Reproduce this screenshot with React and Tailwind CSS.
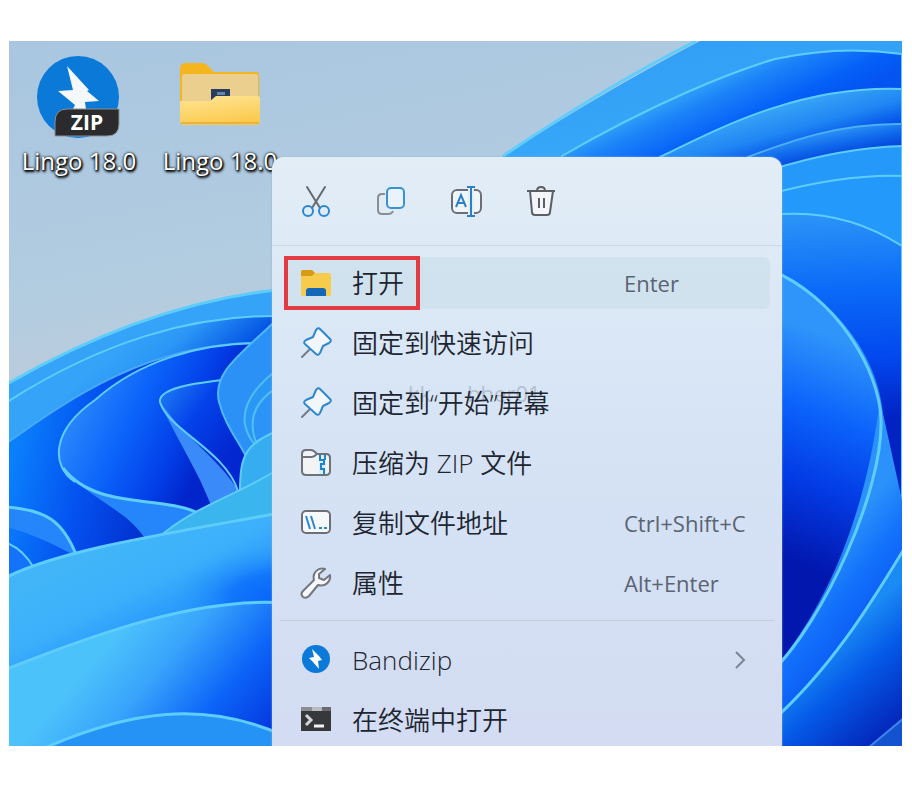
import { useState } from 'react'

const LINE = '#5fcdfb'

// Bloom wallpaper, petals are painted from back to front
function Wallpaper() {
  return (
    <svg
      className="absolute inset-0 h-full w-full"
      viewBox="9 41 893 705"
      preserveAspectRatio="none"
      aria-hidden="true"
    >
      <defs>
        <linearGradient id="sky" x1="0" y1="0" x2="0.25" y2="1">
          <stop offset="0" stopColor="#a9c6e0" />
          <stop offset="0.35" stopColor="#b2cce0" />
          <stop offset="0.6" stopColor="#c3cbd9" />
        </linearGradient>
        <linearGradient id="rim" x1="0" y1="0" x2="0.3" y2="1">
          <stop offset="0" stopColor="#2f9cf5" />
          <stop offset="0.6" stopColor="#38a9f8" />
          <stop offset="1" stopColor="#2390fa" />
        </linearGradient>
        <linearGradient id="fold" gradientUnits="userSpaceOnUse" x1="720" y1="76" x2="750" y2="140">
          <stop offset="0" stopColor="#2f9ff8" />
          <stop offset="0.25" stopColor="#1b83f8" />
          <stop offset="0.7" stopColor="#0560f8" />
          <stop offset="1" stopColor="#0454f2" />
        </linearGradient>
        <linearGradient id="band" gradientUnits="userSpaceOnUse" x1="820" y1="96" x2="835" y2="150">
          <stop offset="0" stopColor="#36a2f6" />
          <stop offset="0.45" stopColor="#1f86f4" />
          <stop offset="0.8" stopColor="#0455ea" />
          <stop offset="1" stopColor="#033fd8" />
        </linearGradient>
        <linearGradient id="band2" gradientUnits="userSpaceOnUse" x1="830" y1="130" x2="836" y2="160">
          <stop offset="0" stopColor="#2c94f5" />
          <stop offset="0.5" stopColor="#0f68ec" />
          <stop offset="1" stopColor="#033fd8" />
        </linearGradient>
        <linearGradient id="petalR" gradientUnits="userSpaceOnUse" x1="850" y1="215" x2="860" y2="420">
          <stop offset="0" stopColor="#2a93f7" />
          <stop offset="0.35" stopColor="#0b6bf8" />
          <stop offset="0.7" stopColor="#0248ee" />
          <stop offset="1" stopColor="#0222c4" />
        </linearGradient>
        <linearGradient id="petalR2" gradientUnits="userSpaceOnUse" x1="870" y1="350" x2="790" y2="560">
          <stop offset="0" stopColor="#3095fa" />
          <stop offset="0.35" stopColor="#0b62fb" />
          <stop offset="0.65" stopColor="#033be4" />
          <stop offset="1" stopColor="#0217ae" />
        </linearGradient>
        <linearGradient id="sheet" gradientUnits="userSpaceOnUse" x1="820" y1="560" x2="880" y2="610">
          <stop offset="0" stopColor="#2a92fa" />
          <stop offset="0.5" stopColor="#1371fb" />
          <stop offset="1" stopColor="#0b5cf5" />
        </linearGradient>
        <linearGradient id="sheet2" gradientUnits="userSpaceOnUse" x1="810" y1="660" x2="880" y2="740">
          <stop offset="0" stopColor="#1a8af5" />
          <stop offset="0.4" stopColor="#055ae8" />
          <stop offset="1" stopColor="#0326ba" />
        </linearGradient>
        <linearGradient id="shade" gradientUnits="userSpaceOnUse" x1="130" y1="340" x2="180" y2="400">
          <stop offset="0" stopColor="#34a3f8" />
          <stop offset="0.4" stopColor="#2b96f6" />
          <stop offset="1" stopColor="#0455e4" />
        </linearGradient>
        <linearGradient id="pool" gradientUnits="userSpaceOnUse" x1="10" y1="470" x2="150" y2="500">
          <stop offset="0" stopColor="#0a80fc" />
          <stop offset="0.5" stopColor="#0452f0" />
          <stop offset="1" stopColor="#0230cf" />
        </linearGradient>
        <linearGradient id="leaf" gradientUnits="userSpaceOnUse" x1="65" y1="430" x2="190" y2="490">
          <stop offset="0" stopColor="#2a86fb" />
          <stop offset="0.4" stopColor="#0b63fa" />
          <stop offset="0.75" stopColor="#0340e8" />
          <stop offset="1" stopColor="#0224cb" />
        </linearGradient>
        <linearGradient id="leaf2" gradientUnits="userSpaceOnUse" x1="165" y1="395" x2="235" y2="450">
          <stop offset="0" stopColor="#1a72f2" />
          <stop offset="0.4" stopColor="#0442ea" />
          <stop offset="1" stopColor="#0226cf" />
        </linearGradient>
        <linearGradient id="cyan" gradientUnits="userSpaceOnUse" x1="130" y1="540" x2="190" y2="660">
          <stop offset="0" stopColor="#41b5f8" />
          <stop offset="0.35" stopColor="#3cb0fb" />
          <stop offset="0.75" stopColor="#2290fb" />
          <stop offset="1" stopColor="#1b86f8" />
        </linearGradient>
        <linearGradient id="cyan2" gradientUnits="userSpaceOnUse" x1="120" y1="630" x2="260" y2="750">
          <stop offset="0" stopColor="#4cc2fb" />
          <stop offset="0.3" stopColor="#38a4fb" />
          <stop offset="0.65" stopColor="#0c64f8" />
          <stop offset="1" stopColor="#0434de" />
        </linearGradient>
        <radialGradient id="glow" gradientUnits="userSpaceOnUse" cx="285" cy="600" r="110" gradientTransform="translate(0 300) scale(1 0.5)">
          <stop offset="0" stopColor="#0561fa" />
          <stop offset="0.5" stopColor="#0b6dfb" stopOpacity="0.75" />
          <stop offset="1" stopColor="#2a9afb" stopOpacity="0" />
        </radialGradient>
      </defs>

      <rect x="9" y="41" width="893" height="705" fill="url(#sky)" />

      {/* upper right arcs */}
      <path d="M400 240 L503 156 Q610 88 700 41 H902 V300 H400Z" fill="url(#rim)" />
      <path d="M503 156 Q610 84 696 41" fill="none" stroke="#62cdfa" strokeWidth="3" />
      <path d="M562 156 C650 105 730 72 775 59 Q840 45 902 54 V300 H562Z" fill="url(#fold)" stroke={LINE} strokeWidth="2" />
      <path d="M660 157 C720 128 800 85 902 89 V300 H660Z" fill="url(#band)" stroke={LINE} strokeWidth="2" />
      <path d="M748 157 C790 141 840 123 902 124 V300 H748Z" fill="url(#band2)" stroke="#4daef5" strokeWidth="2" />
      <path d="M770 170 Q840 148 902 146 V300 H770Z" fill="#2599fa" stroke={LINE} strokeWidth="2" />
      <path d="M770 194 Q845 174 902 176 V300 H770Z" fill="#239afb" stroke={LINE} strokeWidth="2" />
      <path d="M770 215 Q842 207 902 246 V746 H770Z" fill="url(#petalR)" stroke={LINE} strokeWidth="2" />
      <path d="M770 270 C835 295 895 370 882 448 L890 600 L770 690Z" fill="url(#petalR2)" />
      <path d="M880 400 L902 500 V746 H770 V674 C825 610 865 520 880 400Z" fill="url(#sheet)" />
      <path d="M770 270 C835 295 880 370 881 420" fill="none" stroke={LINE} strokeWidth="3" />
      <path d="M881 420 C883 490 825 620 770 674" fill="none" stroke={LINE} strokeWidth="3" />
      <path d="M770 723 C830 670 870 605 904 549 V750 H770Z" fill="url(#sheet2)" stroke={LINE} strokeWidth="3" />
      <path d="M868 748 L904 718 V748Z" fill="#1353cf" stroke="#3c87ee" strokeWidth="2" />

      {/* left bloom */}
      <path d="M7 384 Q150 302 285 289 V746 H7Z" fill="#35a4f8" stroke={LINE} strokeWidth="3" />
      <path d="M7 402 C100 343 190 314 285 316 V746 H7Z" fill="url(#shade)" stroke={LINE} strokeWidth="2" />
      <path d="M7 443 C70 398 150 343 258 343 L285 343 V746 H7Z" fill="url(#pool)" stroke="#47a9f8" strokeWidth="2" />
      <path
        d="M75 482 C50 465 52 430 95 400 C140 360 200 344 256 343 L285 343 V540 H150 C130 510 100 495 75 482Z"
        fill="url(#leaf)"
      />
      <path d="M256 343 C200 344 140 360 95 400 C52 430 50 465 75 482" fill="none" stroke={LINE} strokeWidth="2" />
      <path d="M160 402 C163 386 205 380 240 379 L285 379 V520 L245 500 C215 460 170 440 160 402Z" fill="url(#leaf2)" />
      <path d="M160 402 C170 425 185 450 200 480 L211 505 L238 490 C222 465 200 448 178 425Z" fill="#3b8afa" />
      <path d="M230 379 C195 383 158 388 160 402 C168 430 225 450 238 491" fill="none" stroke={LINE} strokeWidth="2" />
      <path d="M285 312 C240 355 212 372 219 402 C225 425 238 440 248 460 L285 450Z" fill="#2b91f7" stroke="#4fb9fb" strokeWidth="2" />
      <path d="M285 364 Q240 395 245 425 Q249 440 256 445 L285 430Z" fill="#2998f5" stroke="#52bdf5" strokeWidth="2" />
      <path d="M285 383 Q242 405 256 442 L285 430Z" fill="#2c94f7" stroke="#52bdf5" strokeWidth="2" />
      <path d="M285 428 C245 442 240 455 240 492 L285 482Z" fill="#35adf0" stroke={LINE} strokeWidth="2" />
      <path d="M63 468 C95 510 160 495 198 513 L165 540 H146 C128 510 90 500 63 468Z" fill="#2585fb" />
      <path d="M63 468 C95 510 160 495 198 513" fill="none" stroke={LINE} strokeWidth="3" />
      <path d="M7 507 C40 510 63 520 77 557 C55 545 35 535 7 527Z" fill="#2585fb" />
      <path d="M7 507 C45 510 63 520 77 557" fill="none" stroke={LINE} strokeWidth="3" />
      <path d="M7 543 Q23 549 34 568 L7 580Z" fill="#1473fa" stroke={LINE} strokeWidth="2" />
      <path d="M158 538 C195 505 240 495 285 465 V546Z" fill="#3ab5ee" stroke={LINE} strokeWidth="2" />
      <path d="M7 577 C60 550 160 535 285 512 V746 H7Z" fill="url(#cyan)" stroke={LINE} strokeWidth="3" />
      <rect x="150" y="540" width="135" height="110" fill="url(#glow)" />
      <path d="M7 669 C100 632 200 597 285 603 V750 H7Z" fill="url(#cyan2)" stroke={LINE} strokeWidth="3" />
      <path d="M40 750 C130 710 205 700 285 736 V750Z" fill="#2493f5" stroke={LINE} strokeWidth="3" />
    </svg>
  )
}

function BandizipFileIcon() {
  return (
    <svg className="h-[84px] w-[84px]" viewBox="0 0 84 84" aria-hidden="true">
      <circle cx="41" cy="42" r="41" fill="#0b79d8" />
      <path d="M30 11 L52 35 L50 36 L62 46 L48 47 L50 62 L34 58 L38 50 L21 36 L36 35Z" fill="#f4f8fd" />
      <path d="M30 54 H82 V69 Q82 81 70 81 H18 V67 Q18 54 30 54Z" fill="#2b2b2d" stroke="#8a9097" strokeWidth="1" />
      <text x="50" y="75" textAnchor="middle" fontFamily="Open Sans, sans-serif" fontWeight="700" fontSize="21" fill="#fff">
        ZIP
      </text>
    </svg>
  )
}

function FolderFileIcon() {
  return (
    <svg className="h-[84px] w-[84px]" viewBox="0 0 84 84" aria-hidden="true">
      <defs>
        <linearGradient id="folderFront" x1="0" y1="0" x2="0.3" y2="1">
          <stop offset="0" stopColor="#ffe596" />
          <stop offset="1" stopColor="#fbcb50" />
        </linearGradient>
      </defs>
      <path d="M2 14 Q2 8 7 8 H24 Q28 8 31 12 L36 17 H78 Q81 17 81 20 V60 H2Z" fill="#f4b51f" />
      <path d="M4 22 Q4 19 7 19 H77 Q80 19 80 22 V60 H4Z" fill="#ebcf8f" />
      <path d="M33 34 H52 V46 H33Z" fill="#2a3c5c" />
      <path d="M39 37 H47 V40 H39Z" fill="#6688a8" />
      <path d="M2 46 H32 L38 41 H80 Q82 41 82 44 V66 Q82 70 78 70 H6 Q2 70 2 66Z" fill="url(#folderFront)" />
      <path d="M3 68 H81" stroke="#e9b23c" strokeWidth="2" />
    </svg>
  )
}

function CutIcon() {
  return (
    <svg className="h-8 w-8" viewBox="0 0 32 32" fill="none" strokeWidth="2" strokeLinecap="round" aria-hidden="true">
      <path d="M7 2 L20 23 M25 2 L12 23" stroke="#666a70" />
      <circle cx="8" cy="26" r="5" stroke="#2b87cf" />
      <circle cx="24" cy="26" r="5" stroke="#2b87cf" />
    </svg>
  )
}

function CopyIcon() {
  return (
    <svg className="h-8 w-8" viewBox="0 0 32 32" fill="none" strokeWidth="2" aria-hidden="true">
      <path d="M10 9 H7 Q3 9 3 13 V25 Q3 29 7 29 H13 Q17 29 18 26" stroke="#8a8d92" />
      <rect x="12" y="3" width="17" height="20" rx="4" fill="#e9f3fb" stroke="#3a91d4" />
    </svg>
  )
}

function RenameIcon() {
  return (
    <svg className="h-8 w-8" viewBox="0 0 32 32" fill="none" strokeWidth="2" aria-hidden="true">
      <rect x="2" y="5" width="29" height="23" rx="5" fill="#f0f5fa" stroke="#6c7076" />
      <path d="M6 22 L11 10 L16 22 M8 18 H14" stroke="#2b80c6" />
      <path d="M21 3 V30" stroke="#e4eef7" strokeWidth="6" />
      <path d="M17 2 H25 M17 31 H25 M21 2 V31" stroke="#2b80c6" />
    </svg>
  )
}

function DeleteIcon() {
  return (
    <svg className="h-8 w-8" viewBox="0 0 32 32" fill="none" stroke="#5c5f64" strokeWidth="2" strokeLinejoin="round" aria-hidden="true">
      <path d="M5 6 L7 27 Q7 30 10 30 H22 Q25 30 25 27 L28 6Z" fill="#f3f5f8" />
      <path d="M2 6 H30 M12 6 Q12 2 16 2 Q20 2 20 6" />
      <path d="M14 13 V23 M19 13 V23" />
    </svg>
  )
}

function OpenIcon() {
  return (
    <svg className="h-8 w-8" viewBox="0 0 32 32" aria-hidden="true">
      <path d="M1 5 Q1 3 3 3 H12 L15 6 H29 Q31 6 31 8 V27 Q31 29 29 29 H3 Q1 29 1 27Z" fill="#f7cb4b" />
      <path d="M1 5 Q1 3 3 3 H12 L15 6 L12 9 H1Z" fill="#d99a16" />
      <path d="M6 29 V24 Q6 21 9 21 H23 Q26 21 26 24 V29Z" fill="#1567b8" />
    </svg>
  )
}

function PinIcon() {
  return (
    <svg className="h-8 w-8" viewBox="0 0 32 32" strokeWidth="2" strokeLinejoin="round" strokeLinecap="round" aria-hidden="true">
      <path d="M11 21 L2 30" stroke="#777b82" />
      <path
        d="M16 3 Q18 0 20 2 L30 12 Q32 14 29 16 L23 19 L20 26 Q18 29 16 27 L5 17 Q3 15 6 13 L13 10Z"
        fill="#f1f7fd"
        stroke="#2f88cd"
      />
    </svg>
  )
}

function ZipFolderIcon() {
  return (
    <svg className="h-8 w-8" viewBox="0 0 32 32" fill="none" strokeWidth="2" aria-hidden="true">
      <path d="M2 7 Q2 3 6 3 H11 Q13 3 15 5 L17 7 H26 Q30 7 30 11 V24 Q30 28 26 28 H6 Q2 28 2 24Z" fill="#f1f3f5" stroke="#6f7277" />
      <path d="M2 10 H12 Q14 10 17 7" stroke="#6f7277" />
      <path d="M19 8 H26 V27 H19Z" fill="#d9eefb" />
      <path d="M20 8 V13 H24 V17 H21 V22 H24 V27 M25 8 V13" stroke="#1f83c9" />
    </svg>
  )
}

function PathIcon() {
  return (
    <svg className="h-8 w-8" viewBox="0 0 32 32" fill="none" strokeWidth="2" aria-hidden="true">
      <rect x="2" y="4" width="28" height="22" rx="4" fill="#f6f9fc" stroke="#6c7076" />
      <path d="M6 9 L10 22 M11 9 L15 22" stroke="#2b87cf" />
      <path d="M19 21 H22 M24 21 H27" stroke="#2b87cf" />
    </svg>
  )
}

function WrenchIcon() {
  return (
    <svg className="h-8 w-8" viewBox="0 0 32 32" strokeWidth="2" strokeLinejoin="round" aria-hidden="true">
      <path
        d="M25 2 C18 0 12 6 14 13 L3 24 Q0 27 3 30 Q6 32 9 29 L18 18 C25 20 31 15 30 8 L24 13 L19 11 L19 7Z"
        fill="#f7f8fb"
        stroke="#74777d"
      />
    </svg>
  )
}

function BandizipIcon() {
  return (
    <svg className="h-8 w-8" viewBox="0 0 32 32" aria-hidden="true">
      <circle cx="16" cy="15" r="14" fill="#0b79d8" />
      <path d="M12 5 L19 12 L22 16 L18 17 L19 25 L13 18 L9 14 L14 13Z" fill="#fff" />
    </svg>
  )
}

function TerminalIcon() {
  return (
    <svg className="h-8 w-8" viewBox="0 0 32 32" aria-hidden="true">
      <path d="M1 3 H31 V27 H1Z" fill="#37383b" />
      <path d="M1 3 H12 V7 H1Z" fill="#8b8d90" />
      <path d="M12 3 H22 V7 H12Z" fill="#b9bbbe" />
      <path d="M22 3 H31 V7 H22Z" fill="#6a6c70" />
      <path d="M6 11 L11 16 L6 21" fill="none" stroke="#d4d4d4" strokeWidth="3" />
      <path d="M14 22 H24" stroke="#f2f2f2" strokeWidth="3" />
    </svg>
  )
}

const desktopItems = [
  { id: 'zip', name: 'Lingo 18.0', icon: BandizipFileIcon, place: 'left-0 top-[14px]' },
  { id: 'folder', name: 'Lingo 18.0', icon: FolderFileIcon, place: 'left-[141px] top-[14px]' },
]

const quickActions = [
  { label: '剪切', icon: CutIcon },
  { label: '复制', icon: CopyIcon },
  { label: '重命名', icon: RenameIcon },
  { label: '删除', icon: DeleteIcon },
]

const fileActions = [
  { label: '打开', icon: OpenIcon, shortcut: 'Enter', marked: true },
  { label: '固定到快速访问', icon: PinIcon },
  { label: '固定到“开始”屏幕', icon: PinIcon },
  { label: '压缩为 ZIP 文件', icon: ZipFolderIcon },
  { label: '复制文件地址', icon: PathIcon, shortcut: 'Ctrl+Shift+C' },
  { label: '属性', icon: WrenchIcon, shortcut: 'Alt+Enter' },
]

const appActions = [
  { label: 'Bandizip', icon: BandizipIcon, submenu: true },
  { label: '在终端中打开', icon: TerminalIcon },
]

function MenuRow({ item, active, onHover }) {
  const Icon = item.icon
  return (
    <li className="relative">
      <button
        type="button"
        onMouseEnter={onHover}
        className={`flex h-[52px] w-full items-center rounded-md pl-4 text-left ${active ? 'bg-[#c8dde8]/60' : ''}`}
      >
        <Icon />
        <span className="ml-5 flex-1 text-[26px] leading-8 font-[350] whitespace-nowrap text-[#1d2530]">{item.label}</span>
        {item.shortcut && (
          <span className="w-[146px] text-[22px] leading-8 whitespace-nowrap text-[#5b6472]">{item.shortcut}</span>
        )}
        {item.submenu && (
          <svg className="mr-6 h-5 w-3" viewBox="0 0 12 20" fill="none" stroke="#7b8494" strokeWidth="2" aria-hidden="true">
            <path d="M2 2 L10 10 L2 18" />
          </svg>
        )}
      </button>
      {item.marked && <div className="pointer-events-none absolute -inset-y-px left-0 w-[136px] border-4 border-[#e23b42]" />}
    </li>
  )
}

export default function App() {
  const [active, setActive] = useState('打开')

  return (
    <div className="min-h-screen bg-white pt-[41px] pr-[10px] pl-[9px] font-['Open_Sans','Noto_Sans_CJK_SC',sans-serif]">
      <main className="relative overflow-hidden">
        <Wallpaper />

        {desktopItems.map(({ id, name, icon: Icon, place }) => (
          <button key={id} type="button" className={`absolute flex w-[140px] flex-col items-center ${place}`}>
            <Icon />
            <span className="mt-1 text-[24px] leading-9 whitespace-nowrap text-white [text-shadow:1px_1px_2px_#000,0_0_3px_#000,1px_2px_3px_#000]">
              {name}
            </span>
          </button>
        ))}

        <div className="relative mt-[116px] mr-[120px] ml-[263px] rounded-t-xl bg-linear-to-b from-[#e2edf6] via-[#d5e3f5] to-[#d3dcf2] shadow-[0_0_2px_#8fb4d8]">
          {/* faint watermark across the menu */}
          <div className="pointer-events-none absolute top-[220px] left-[136px] flex gap-9 text-[22px] leading-8 text-[#8c97a8]/50" aria-hidden="true">
            <span>kk</span>
            <span>bher01</span>
          </div>

          <div className="flex h-[89px] items-center gap-[43px] border-b border-[#c9d8e4] pl-7">
            {quickActions.map(({ label, icon: Icon }) => (
              <button key={label} type="button" aria-label={label}>
                <Icon />
              </button>
            ))}
          </div>

          <ul className="flex flex-col gap-2 px-3 pt-[11px]">
            {fileActions.map((item) => (
              <MenuRow key={item.label} item={item} active={active === item.label} onHover={() => setActive(item.label)} />
            ))}
          </ul>
          <hr className="mx-2 mt-[11px] mb-[13px] border-[#c5cfe0]" />
          <ul className="flex flex-col gap-2 px-3">
            {appActions.map((item) => (
              <MenuRow key={item.label} item={item} active={active === item.label} onHover={() => setActive(item.label)} />
            ))}
          </ul>
        </div>
      </main>
    </div>
  )
}
